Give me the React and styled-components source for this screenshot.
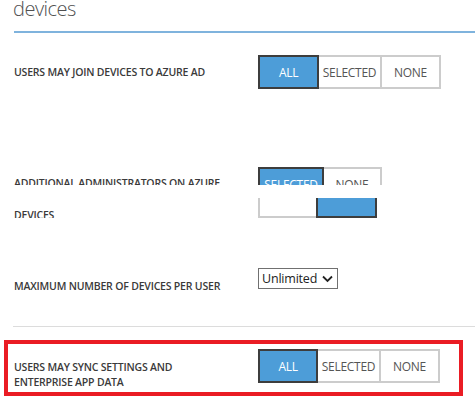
import styled, { createGlobalStyle } from 'styled-components';

const GlobalStyle = createGlobalStyle`
  html, body {
    margin: 0;
    padding: 0;
    background: #fff;
  }
  body {
    font-family: "Open Sans", "Liberation Sans", sans-serif;
    color: #333;
  }
`

function Segments({ items, active, widths }) {
  return (
    <SegmentGroup>
      {items.map((item, i) => (
        <Segment key={i} $active={i === active} $width={widths[i]}>
          {item}
        </Segment>
      ))}
    </SegmentGroup>
  );
}

function App() {
  return (
    <Page>
      <GlobalStyle />
      <Title>devices</Title>
      <Rule />

      <Row $top={22}>
        <Label $pad={0}>USERS MAY JOIN DEVICES TO AZURE AD</Label>
        <Segments items={['ALL', 'SELECTED', 'NONE']} active={0} widths={[61, 65, 61]} />
      </Row>

      <Slice $top={78} $height={18} $align="flex-start">
        <Label $pad={9}>ADDITIONAL ADMINISTRATORS ON AZURE</Label>
        <Segments items={['SELECTED', 'NONE']} active={0} widths={[66, 60]} />
      </Slice>

      <Slice $top={13} $height={20} $align="flex-end">
        <Label $pad={10} $self="flex-start"><Caret />DEVICES</Label>
        <Segments items={['', '']} active={1} widths={[60, 61]} />
      </Slice>

      <Row $top={50} $align="flex-start">
        <Label $pad={11}>MAXIMUM NUMBER OF DEVICES PER USER</Label>
        <SelectBox>
          <span>Unlimited</span>
          <svg width="11" height="8" viewBox="0 0 11 8">
            <path d="M1 1.5 L5.5 6 L10 1.5" fill="none" stroke="#222" strokeWidth="1.8" />
          </svg>
        </SelectBox>
      </Row>

      <Divider />

      <Highlight>
        <Row $top={0} $align="flex-start">
          <Label $pad={11}>USERS MAY SYNC SETTINGS AND<br />ENTERPRISE APP DATA</Label>
          <Segments items={['ALL', 'SELECTED', 'NONE']} active={0} widths={[60, 65, 61]} />
        </Row>
      </Highlight>
    </Page>
  );
}

const Page = styled.div`
  padding-left: 14px;
  width: 475px;
  box-sizing: border-box;
`

const Title = styled.h1`
  margin: 0 0 0 -1px;
  font-size: 20px;
  font-weight: 300;
  line-height: 18px;
  color: #505050;
  letter-spacing: -0.5px;
`

const Rule = styled.div`
  height: 2px;
  margin-top: 13px;
  background: #7fb3dd;
`

const Row = styled.div`
  display: flex;
  align-items: ${({ $align }) => $align || 'center'};
  margin-top: ${({ $top }) => $top}px;
`

const Slice = styled.div`
  display: flex;
  align-items: ${({ $align }) => $align};
  height: ${({ $height }) => $height}px;
  margin-top: ${({ $top }) => $top}px;
  overflow: hidden;
`

const Label = styled.div`
  flex: 0 0 244px;
  align-self: ${({ $self }) => $self || 'auto'};
  padding-top: ${({ $pad }) => $pad}px;
  font-size: 10.5px;
  font-weight: 600;
  line-height: 15px;
  color: #3a3a3a;
  letter-spacing: -0.2px;
  white-space: nowrap;
`

const Caret = styled.span`
  display: inline-block;
  width: 1px;
  height: 15px;
  margin-left: -1px;
  vertical-align: -4px;
  background: #111;
`

const SegmentGroup = styled.div`
  display: flex;
`

const Segment = styled.div`
  position: relative;
  z-index: ${({ $active }) => ($active ? 1 : 0)};
  box-sizing: border-box;
  width: ${({ $width }) => $width}px;
  height: 34px;
  margin-left: -2px;
  &:first-child { margin-left: 0; }
  display: flex;
  align-items: center;
  justify-content: center;
  border: 2px solid ${({ $active }) => ($active ? '#3d3d3d' : '#cccccc')};
  background: ${({ $active }) => ($active ? '#4d9dd8' : '#fff')};
  color: ${({ $active }) => ($active ? '#fff' : '#555')};
  font-size: 12px;
  letter-spacing: -0.3px;
`

const SelectBox = styled.div`
  box-sizing: border-box;
  width: 80px;
  height: 21px;
  display: flex;
  align-items: center;
  justify-content: space-between;
  padding: 0 4px 0 3px;
  border: 1px solid #707070;
  font-size: 12.5px;
  letter-spacing: -0.2px;
  color: #222;
`

const Divider = styled.div`
  height: 1px;
  margin-top: 32px;
  margin-left: -1px;
  background: #dcdcdc;
`

const Highlight = styled.div`
  box-sizing: border-box;
  width: 459px;
  height: 56px;
  margin: 13px 0 0 -10px;
  padding: 5px 0 0 6px;
  border: 4px solid #ea1c24;
`

export default App;
